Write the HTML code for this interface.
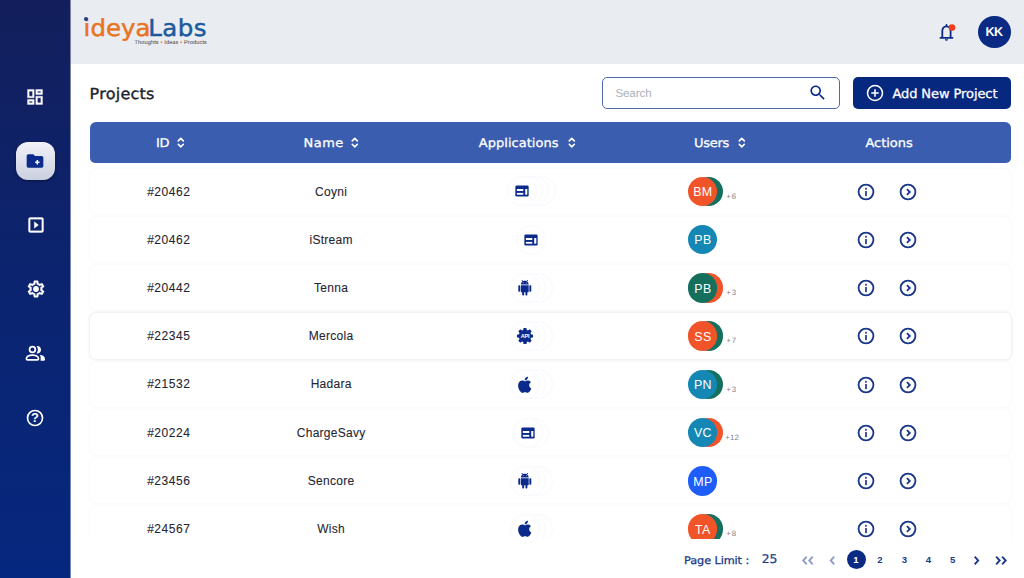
<!DOCTYPE html>
<html lang="en">
<head>
<meta charset="utf-8">
<title>Projects</title>
<style>
*{box-sizing:border-box;margin:0;padding:0}
html,body{width:1024px;height:578px;overflow:hidden;background:#fff;font-family:"Liberation Sans",sans-serif;color:#1b2330}
svg{display:block;position:absolute;overflow:visible}
i{font-style:normal}
#side{position:absolute;left:0;top:0;width:71px;height:578px;background:linear-gradient(180deg,#131f5c 0%,#0b2470 50%,#06277f 100%)}
#side:after{content:'';position:absolute;left:70px;top:0;width:1px;height:578px;background:rgba(255,255,255,.45)}
#top{position:absolute;left:71px;top:0;width:953px;height:64px;background:#e9ecf1}
#active{position:absolute;left:16px;top:142px;width:39px;height:38px;border-radius:12px;background:linear-gradient(180deg,#f2f3f8 0%,#cacfdf 100%);box-shadow:0 1px 3px rgba(0,0,10,.45)}
#kk{position:absolute;left:978.2px;top:15.7px;width:32.7px;height:32.7px;border-radius:50%;background:#0a2a83}
#search{position:absolute;left:602px;top:77px;width:238px;height:32px;border:1px solid #4f68ad;border-radius:5px;background:#fff}
#addbtn{position:absolute;left:853px;top:77px;width:158px;height:32px;border-radius:5px;background:#07287f}
#thead{position:absolute;left:90px;top:122px;width:921px;height:40.5px;border-radius:6px 6px 5px 5px;background:#3b5daf}
.row{position:absolute;left:90px;width:921px;height:45.2px;border-radius:6px;background:#fff;box-shadow:0 0 3px rgba(30,40,70,.055)}
.t{position:absolute;white-space:nowrap;text-rendering:geometricPrecision}
.c{position:absolute;width:200px;text-align:center;white-space:nowrap;color:#1f2733}
.ring{position:absolute;width:30px;height:30px;border-radius:50%;border:1px solid #f8f9fd;background:#fff}
.av{position:absolute;width:29.6px;height:29.6px;border-radius:50%}
.plus{font-size:7.8px;color:#7b7f86;line-height:10px;letter-spacing:.9px}
.tag i{color:#e8731d}
#foot{position:absolute;left:71px;top:538.8px;width:953px;height:39.2px;background:#fff}
</style>
</head>
<body>
<aside>
<div id="side"></div>
<svg style="left:25.2px;top:86.7px" width="20" height="20" viewBox="0 0 24 24" ><path fill="#fff" stroke="#fff" stroke-width=".4" d="M19 5v2h-4V5h4M9 5v6H5V5h4m10 8v6h-4v-6h4M9 17v2H5v-2h4M21 3h-8v6h8V3zM11 3H3v10h8V3zm10 8h-8v10h8V11zm-10 4H3v6h8v-6z"/></svg>
<div id="active"></div>
<svg style="left:25.4px;top:150.6px" width="20" height="20" viewBox="0 0 24 24" ><path fill="#0b2a8c" d="M20 6h-8l-2-2H4c-1.110 0-1.990.89-1.990 2L2 18c0 1.110.89 2 2 2h16c1.110 0 2-.89 2-2V8c0-1.110-.89-2-2-2z"/><path fill="none" stroke="#fff" stroke-width="1.900" d="M14.800 10.900v5.200M12.200 13.500h5.200"/></svg>
<svg style="left:25.5px;top:215.2px" width="20" height="20" viewBox="0 0 24 24" ><path fill="#fff" stroke="#fff" stroke-width=".4" stroke-linejoin="round" d="M10 8v8l5-4-5-4zm9-5H5c-1.1 0-2 .9-2 2v14c0 1.1.9 2 2 2h14c1.1 0 2-.9 2-2V5c0-1.1-.9-2-2-2zm0 16H5V5h14v14z"/></svg>
<svg style="left:25.5px;top:279.1px" width="20" height="20" viewBox="0 0 24 24" ><path fill="#fff" stroke="#fff" stroke-width=".5" d="M19.43 12.98c.04-.32.07-.64.07-.98 0-.34-.03-.66-.07-.98l2.11-1.65c.19-.15.24-.42.12-.64l-2-3.46c-.09-.16-.26-.25-.44-.25-.06 0-.12.01-.17.03l-2.49 1c-.52-.4-1.08-.73-1.69-.98l-.38-2.65C14.460 2.18 14.250 2 14 2h-4c-.25 0-.46.18-.49.42l-.38 2.65c-.61.25-1.17.59-1.69.98l-2.49-1c-.06-.02-.12-.03-.18-.03-.17 0-.34.09-.43.25l-2 3.46c-.13.22-.07.49.12.64l2.11 1.65c-.04.32-.07.65-.07.98 0 .33.03.66.07.98l-2.11 1.650c-.19.15-.24.42-.12.64l2 3.46c.09.16.26.25.44.25.06 0 .12-.01.17-.03l2.49-1c.52.4 1.08.73 1.69.98l.38 2.65c.03.24.24.42.49.42h4c.25 0 .46-.18.49-.42l.38-2.65c.61-.25 1.17-.59 1.69-.98l2.49 1c.06.02.12.03.18.03.17 0 .34-.09.43-.25l2-3.46c.12-.22.07-.49-.12-.64l-2.11-1.65zm-1.980-1.710c.04.31.05.52.05.73 0 .21-.02.43-.05.73l-.14 1.130.89.7 1.080.84-.7 1.210-1.270-.51-1.040-.42-.9.68c-.43.32-.84.56-1.250.73l-1.060.43-.16 1.130-.2 1.350h-1.400l-.19-1.350-.16-1.130-1.060-.43c-.43-.18-.83-.41-1.230-.71l-.91-.7-1.060.43-1.270.51-.7-1.210 1.080-.84.89-.7-.14-1.130c-.03-.31-.05-.54-.05-.74s.02-.43.05-.73l.14-1.130-.89-.7-1.080-.84.7-1.210 1.270.51 1.040.42.9-.68c.43-.32.84-.56 1.250-.73l1.060-.43.16-1.130.2-1.350h1.390l.19 1.350.16 1.130 1.060.43c.43.18.83.41 1.230.71l.91.7 1.060-.43 1.270-.51.7 1.210-1.070.85-.89.7.14 1.130z"/><circle cx="12" cy="12" r="3.5" fill="#fff"/></svg>
<svg style="left:25.1px;top:343.3px" width="20.8" height="20.8" viewBox="0 0 24 24" ><circle cx="8.6" cy="7.6" r="3.3" fill="none" stroke="#fff" stroke-width="2"/><path fill="none" stroke="#fff" stroke-width="2" d="M1.6 18.2c0-2.6 3.4-4.2 7-4.200s7 1.600 7 4.200c0 .9-.6 1.400-1.400 1.400H3c-.8 0-1.400-.5-1.400-1.400z"/><path fill="#fff" d="M14.200 3.400c2.400 0 4.300 1.900 4.300 4.300s-1.900 4.300-4.300 4.300c-.4 0-.7 0-1-.1 1-1.100 1.600-2.600 1.600-4.200s-.6-3.100-1.600-4.200c.3-.1.600-.1 1-.1z"/><path fill="#fff" d="M17.300 13.600c3.100.5 5.700 2 5.700 4.500v1c0 .9-.6 1.500-1.500 1.500h-3.700c.2-.5.300-1 .3-1.500v-1c0-1.800-.3-3.300-.8-4.500z"/></svg>
<svg style="left:25.2px;top:408.3px" width="20" height="20" viewBox="0 0 24 24" ><circle cx="12" cy="12" r="9" fill="none" stroke="#fff" stroke-width="2"/><text x="12" y="17.300" text-anchor="middle" font-family="Liberation Sans, sans-serif" font-weight="700" font-size="15.500" fill="#fff">?</text></svg>
</aside>
<header>
<div id="top"></div>
<span class="t" style="left:83.60px;top:11.12px;font:400 24.5px/34px 'DejaVu Sans','Liberation Sans',sans-serif;letter-spacing:0.00px;color:#e8731d;-webkit-text-stroke:0.5px #e8731d;transform:scaleY(0.95);transform-origin:0 25.48px;">ideya<b style="font-weight:400;margin-left:-2.340px;letter-spacing:.45px;color:#1c5a9d;-webkit-text-stroke-color:#1c5a9d">Labs</b></span>
<i style="position:absolute;left:84.2px;top:17.400px;width:4px;height:4px;border-radius:50%;background:#1d3f86"></i>
<span class="t tag" style="left:134.50px;top:38.86px;font:400 5.6px/8px 'Liberation Sans',sans-serif;letter-spacing:0.12px;color:#3c3c3c;">Thoughts <i>&#8226;</i> Ideas <i>&#8226;</i> Products</span>
<svg style="left:936px;top:20px" width="24" height="24" viewBox="0 0 24 24"><path fill="none" stroke="#0a2a83" stroke-width="1.800" stroke-linejoin="round" d="M6.300 17.700V11c0-2.700 1.700-4.700 4.150-4.700s4.150 2 4.150 4.700v6.700"/><path fill="none" stroke="#0a2a83" stroke-width="1.800" stroke-linecap="round" d="M4.400 17.800H16.500M10.450 6.200V4.900"/><path fill="#0a2a83" d="M8.900 19.300h3.100c0 .9-.7 1.500-1.550 1.500s-1.550-.6-1.550-1.500z"/><circle cx="16" cy="7.600" r="3.300" fill="#ee3d17"/></svg>
<div id="kk"></div>
<span class="t" style="left:985.50px;top:22.93px;font:700 12.6px/18px 'Liberation Sans',sans-serif;letter-spacing:-0.59px;color:#fff;">KK</span>
</header>
<main>
<span class="t" style="left:89.60px;top:83.16px;font:400 16px/22px 'DejaVu Sans','Liberation Sans',sans-serif;letter-spacing:0.24px;color:#1b2330;-webkit-text-stroke:0.4px #1b2330;transform:scaleY(0.95);transform-origin:0 16.54px;">Projects</span>
<div id="search"></div>
<span class="t" style="left:615.40px;top:86.42px;font:400 11.5px/16px 'Liberation Sans',sans-serif;letter-spacing:-0.05px;color:#adb0b5;">Search</span>
<svg style="left:807.7px;top:83.4px" width="19.5" height="19.5" viewBox="0 0 24 24" ><path fill="#0a2a83" d="M15.500 14h-.79l-.28-.27C15.410 12.590 16 11.110 16 9.500 16 5.910 13.090 3 9.500 3S3 5.910 3 9.500 5.910 16 9.500 16c1.610 0 3.090-.59 4.230-1.570l.27.28v.79l5 4.990L20.490 19l-4.990-5zm-6 0C7.010 14 5 11.990 5 9.500S7.010 5 9.500 5 14 7.010 14 9.500 11.990 14 9.500 14z"/></svg>
<div id="addbtn"></div>
<svg style="left:865.3px;top:83px" width="20" height="20" viewBox="0 0 24 24" ><circle cx="12" cy="12" r="9" fill="none" stroke="#fff" stroke-width="1.900"/><path stroke="#fff" stroke-width="1.900" d="M12 7.500v9M7.500 12h9"/></svg>
<span class="t" style="left:892.40px;top:85.90px;font:400 13px/18px 'DejaVu Sans','Liberation Sans',sans-serif;letter-spacing:-0.08px;color:#fff;-webkit-text-stroke:0.3px #fff;transform:scaleY(0.98);transform-origin:0 13.50px;">Add New Project</span>
<section class="table">
<div class="tr">
<div id="thead"></div>
<span class="t" style="left:156.00px;top:134.60px;font:400 13px/18px 'DejaVu Sans','Liberation Sans',sans-serif;letter-spacing:-0.33px;color:#fff;-webkit-text-stroke:0.3px #fff;transform:scaleY(0.93);transform-origin:0 13.50px;">ID</span>
<svg style="left:177.4px;top:137px" width="7.600" height="11.200" viewBox="0 0 9 13"><path fill="none" stroke="#fff" stroke-width="1.950" stroke-linecap="round" stroke-linejoin="round" d="M1.500 4.500L4.500 1.500L7.500 4.500M1.500 8.500L4.500 11.500L7.500 8.500"/></svg>
<span class="t" style="left:303.60px;top:134.60px;font:400 13px/18px 'DejaVu Sans','Liberation Sans',sans-serif;letter-spacing:0.45px;color:#fff;-webkit-text-stroke:0.3px #fff;transform:scaleY(0.93);transform-origin:0 13.50px;">Name</span>
<svg style="left:351.3px;top:137px" width="7.600" height="11.200" viewBox="0 0 9 13"><path fill="none" stroke="#fff" stroke-width="1.950" stroke-linecap="round" stroke-linejoin="round" d="M1.500 4.500L4.500 1.500L7.500 4.500M1.500 8.500L4.500 11.500L7.500 8.500"/></svg>
<span class="t" style="left:478.75px;top:134.60px;font:400 13px/18px 'DejaVu Sans','Liberation Sans',sans-serif;letter-spacing:0.03px;color:#fff;-webkit-text-stroke:0.3px #fff;transform:scaleY(0.93);transform-origin:0 13.50px;">Applications</span>
<svg style="left:567.6px;top:137px" width="7.600" height="11.200" viewBox="0 0 9 13"><path fill="none" stroke="#fff" stroke-width="1.950" stroke-linecap="round" stroke-linejoin="round" d="M1.500 4.500L4.500 1.500L7.500 4.500M1.500 8.500L4.500 11.500L7.500 8.500"/></svg>
<span class="t" style="left:694.00px;top:134.60px;font:400 13px/18px 'DejaVu Sans','Liberation Sans',sans-serif;letter-spacing:-0.28px;color:#fff;-webkit-text-stroke:0.3px #fff;transform:scaleY(0.93);transform-origin:0 13.50px;">Users</span>
<svg style="left:738.2px;top:137px" width="7.600" height="11.200" viewBox="0 0 9 13"><path fill="none" stroke="#fff" stroke-width="1.950" stroke-linecap="round" stroke-linejoin="round" d="M1.500 4.500L4.500 1.500L7.500 4.500M1.500 8.500L4.500 11.500L7.500 8.500"/></svg>
<span class="t" style="left:865.50px;top:134.60px;font:400 13px/18px 'DejaVu Sans','Liberation Sans',sans-serif;letter-spacing:-0.04px;color:#fff;-webkit-text-stroke:0.3px #fff;transform:scaleY(0.93);transform-origin:0 13.50px;">Actions</span>
</div>
<div class="tr">
<div class="row" style="top:168.70px"></div>
<span class="c" style="left:68.76px;top:184px;font:12px/17px 'Liberation Sans',sans-serif;letter-spacing:.52px;-webkit-text-stroke:.1px #1f2733">#20462</span>
<span class="c" style="left:231.13px;top:184px;font:12px/17px 'Liberation Sans',sans-serif;letter-spacing:.27px;-webkit-text-stroke:.1px #1f2733">Coyni</span>
<i class="ring" style="left:525.8px;top:176.4px"></i>
<i class="ring" style="left:519.4px;top:176.4px"></i>
<i class="ring" style="left:513.0px;top:176.4px"></i>
<i class="ring" style="left:506.6px;top:176.4px"></i>
<svg style="left:513.6px;top:183.4px" width="16" height="16" viewBox="0 0 24 24" ><g transform="scale(1.5)"><rect x="1.350" y="2.400" width="13.300" height="11.200" rx="1.400" fill="#0b2a8c"/><rect x="2.900" y="6" width="6.400" height="2" fill="#fff"/><rect x="2.900" y="9.900" width="6.400" height="1.800" fill="#fff"/><rect x="11.200" y="6" width="2.100" height="5.700" fill="#fff"/></g></svg>
<i class="av" style="left:693.8px;top:176.6px;background:#146f5d"></i>
<i class="av" style="left:687.8px;top:176.6px;background:#f2542a"></i>
<span class="c" style="left:602.9px;top:184px;font:12.4px/17px 'Liberation Sans',sans-serif;letter-spacing:.4px;color:#fff">BM</span>
<span class="t plus" style="left:726.2px;top:191.7px">+6</span>
<svg style="left:855.8px;top:181.6px" width="20" height="20" viewBox="0 0 24 24" ><circle cx="12" cy="12" r="8.900" fill="none" stroke="#1b3789" stroke-width="2.200"/><rect x="11" y="10.800" width="2" height="6.200" fill="#1b3789"/><rect x="11" y="7" width="2" height="2.200" fill="#1b3789"/></svg>
<svg style="left:897.7px;top:181.6px" width="20" height="20" viewBox="0 0 24 24" ><circle cx="12" cy="12" r="8.900" fill="none" stroke="#1b3789" stroke-width="2.200"/><path fill="none" stroke="#1b3789" stroke-width="2.200" d="M10.700 8.500L14.200 12L10.700 15.500"/></svg>
</div>
<div class="tr">
<div class="row" style="top:216.95px"></div>
<span class="c" style="left:68.76px;top:232px;font:12px/17px 'Liberation Sans',sans-serif;letter-spacing:.52px;-webkit-text-stroke:.1px #1f2733">#20462</span>
<span class="c" style="left:231.13px;top:232px;font:12px/17px 'Liberation Sans',sans-serif;letter-spacing:.27px;-webkit-text-stroke:.1px #1f2733">iStream</span>
<i class="ring" style="left:516.2px;top:224.7px"></i>
<svg style="left:523.2px;top:231.65px" width="16" height="16" viewBox="0 0 24 24" ><g transform="scale(1.5)"><rect x="1.350" y="2.400" width="13.300" height="11.200" rx="1.400" fill="#0b2a8c"/><rect x="2.900" y="6" width="6.400" height="2" fill="#fff"/><rect x="2.900" y="9.900" width="6.400" height="1.800" fill="#fff"/><rect x="11.200" y="6" width="2.100" height="5.700" fill="#fff"/></g></svg>
<i class="av" style="left:687.8px;top:224.8px;background:#1487b5"></i>
<span class="c" style="left:602.9px;top:232px;font:12.4px/17px 'Liberation Sans',sans-serif;letter-spacing:.4px;color:#fff">PB</span>
<svg style="left:855.8px;top:229.8px" width="20" height="20" viewBox="0 0 24 24" ><circle cx="12" cy="12" r="8.900" fill="none" stroke="#1b3789" stroke-width="2.200"/><rect x="11" y="10.800" width="2" height="6.200" fill="#1b3789"/><rect x="11" y="7" width="2" height="2.200" fill="#1b3789"/></svg>
<svg style="left:897.7px;top:229.8px" width="20" height="20" viewBox="0 0 24 24" ><circle cx="12" cy="12" r="8.900" fill="none" stroke="#1b3789" stroke-width="2.200"/><path fill="none" stroke="#1b3789" stroke-width="2.200" d="M10.700 8.500L14.200 12L10.700 15.500"/></svg>
</div>
<div class="tr">
<div class="row" style="top:265.20px"></div>
<span class="c" style="left:68.76px;top:280px;font:12px/17px 'Liberation Sans',sans-serif;letter-spacing:.52px;-webkit-text-stroke:.1px #1f2733">#20442</span>
<span class="c" style="left:231.13px;top:280px;font:12px/17px 'Liberation Sans',sans-serif;letter-spacing:.27px;-webkit-text-stroke:.1px #1f2733">Tenna</span>
<i class="ring" style="left:522.6px;top:272.9px"></i>
<i class="ring" style="left:516.2px;top:272.9px"></i>
<i class="ring" style="left:509.8px;top:272.9px"></i>
<svg style="left:517.0px;top:280.1px" width="15.6" height="15.6" viewBox="0 0 24 24" ><path fill="#0b2a8c" d="M6 18c0 .55.45 1 1 1h1v3.500c0 .83.67 1.500 1.500 1.500s1.500-.67 1.500-1.500V19h2v3.500c0 .83.67 1.500 1.500 1.500s1.500-.67 1.500-1.500V19h1c.55 0 1-.45 1-1V8H6v10zM3.500 8C2.670 8 2 8.670 2 9.500v7c0 .83.67 1.500 1.500 1.500S5 17.330 5 16.500v-7C5 8.670 4.330 8 3.500 8zm17 0c-.83 0-1.500.67-1.500 1.500v7c0 .83.67 1.500 1.500 1.500s1.500-.67 1.500-1.500v-7c0-.83-.67-1.500-1.500-1.500zm-4.970-5.840l1.300-1.300c.2-.2.2-.51 0-.71-.2-.2-.51-.2-.71 0l-1.480 1.480C13.850 1.230 12.950 1 12 1c-.96 0-1.860.23-2.660.63L7.850.15c-.2-.2-.51-.2-.71 0-.2.2-.2.51 0 .71l1.310 1.310C6.970 3.260 6 5.010 6 7h12c0-1.990-.97-3.750-2.470-4.840zM10 5H9V4h1v1zm5 0h-1V4h1v1z"/></svg>
<i class="av" style="left:693.8px;top:273.1px;background:#f2542a"></i>
<i class="av" style="left:687.8px;top:273.1px;background:#146f5d"></i>
<span class="c" style="left:602.9px;top:281px;font:12.4px/17px 'Liberation Sans',sans-serif;letter-spacing:.4px;color:#fff">PB</span>
<span class="t plus" style="left:726.2px;top:288.2px">+3</span>
<svg style="left:855.8px;top:278.1px" width="20" height="20" viewBox="0 0 24 24" ><circle cx="12" cy="12" r="8.900" fill="none" stroke="#1b3789" stroke-width="2.200"/><rect x="11" y="10.800" width="2" height="6.200" fill="#1b3789"/><rect x="11" y="7" width="2" height="2.200" fill="#1b3789"/></svg>
<svg style="left:897.7px;top:278.1px" width="20" height="20" viewBox="0 0 24 24" ><circle cx="12" cy="12" r="8.900" fill="none" stroke="#1b3789" stroke-width="2.200"/><path fill="none" stroke="#1b3789" stroke-width="2.200" d="M10.700 8.500L14.200 12L10.700 15.500"/></svg>
</div>
<div class="tr">
<div class="row" style="top:313.45px;box-shadow:0 0 3.5px rgba(20,25,40,.15)"></div>
<span class="c" style="left:68.76px;top:328px;font:12px/17px 'Liberation Sans',sans-serif;letter-spacing:.52px;-webkit-text-stroke:.1px #1f2733">#22345</span>
<span class="c" style="left:231.13px;top:328px;font:12px/17px 'Liberation Sans',sans-serif;letter-spacing:.27px;-webkit-text-stroke:.1px #1f2733">Mercola</span>
<i class="ring" style="left:522.6px;top:321.1px"></i>
<i class="ring" style="left:516.2px;top:321.1px"></i>
<i class="ring" style="left:509.8px;top:321.1px"></i>
<svg style="left:515.8px;top:327.15px" width="18" height="18" viewBox="0 0 24 24" ><path fill="#0b2a8c" stroke="#0b2a8c" stroke-width="1.600" stroke-linejoin="round" d="M19.43 10.40 L21.91 10.67 L21.91 13.33 L19.43 13.60 L18.38 16.12 L19.95 18.07 L18.07 19.95 L16.12 18.38 L13.60 19.43 L13.33 21.91 L10.67 21.91 L10.40 19.43 L7.88 18.38 L5.93 19.95 L4.05 18.07 L5.62 16.12 L4.57 13.60 L2.09 13.33 L2.09 10.67 L4.57 10.40 L5.62 7.88 L4.05 5.93 L5.93 4.05 L7.88 5.62 L10.40 4.57 L10.67 2.09 L13.33 2.09 L13.60 4.57 L16.12 5.62 L18.07 4.05 L19.95 5.93 L18.38 7.88Z"/><text x="12" y="14.700" text-anchor="middle" font-family="Liberation Sans, sans-serif" font-weight="700" font-size="7.500" fill="#fff" letter-spacing="-.3">API</text></svg>
<i class="av" style="left:693.8px;top:321.3px;background:#146f5d"></i>
<i class="av" style="left:687.8px;top:321.3px;background:#f2542a"></i>
<span class="c" style="left:602.9px;top:329px;font:12.4px/17px 'Liberation Sans',sans-serif;letter-spacing:.4px;color:#fff">SS</span>
<span class="t plus" style="left:726.2px;top:336.4px">+7</span>
<svg style="left:855.8px;top:326.3px" width="20" height="20" viewBox="0 0 24 24" ><circle cx="12" cy="12" r="8.900" fill="none" stroke="#1b3789" stroke-width="2.200"/><rect x="11" y="10.800" width="2" height="6.200" fill="#1b3789"/><rect x="11" y="7" width="2" height="2.200" fill="#1b3789"/></svg>
<svg style="left:897.7px;top:326.3px" width="20" height="20" viewBox="0 0 24 24" ><circle cx="12" cy="12" r="8.900" fill="none" stroke="#1b3789" stroke-width="2.200"/><path fill="none" stroke="#1b3789" stroke-width="2.200" d="M10.700 8.500L14.200 12L10.700 15.500"/></svg>
</div>
<div class="tr">
<div class="row" style="top:361.70px"></div>
<span class="c" style="left:68.76px;top:376px;font:12px/17px 'Liberation Sans',sans-serif;letter-spacing:.52px;-webkit-text-stroke:.1px #1f2733">#21532</span>
<span class="c" style="left:231.13px;top:376px;font:12px/17px 'Liberation Sans',sans-serif;letter-spacing:.27px;-webkit-text-stroke:.1px #1f2733">Hadara</span>
<i class="ring" style="left:522.6px;top:369.4px"></i>
<i class="ring" style="left:516.2px;top:369.4px"></i>
<i class="ring" style="left:509.8px;top:369.4px"></i>
<svg style="left:515.05px;top:374.65px" width="19.5" height="19.5" viewBox="0 0 24 24" ><path fill="#0b2a8c" d="M18.710 19.500c-.83 1.240-1.710 2.450-3.050 2.470-1.340.03-1.770-.79-3.290-.79-1.530 0-2 .77-3.270.82-1.310.05-2.300-1.320-3.140-2.530C4.250 17 2.940 12.450 4.700 9.390c.87-1.520 2.430-2.480 4.120-2.510 1.280-.02 2.500.87 3.290.87.780 0 2.260-1.070 3.810-.91.650.03 2.470.26 3.640 1.980-.09.06-2.170 1.280-2.150 3.810.03 3.020 2.650 4.030 2.680 4.040-.03.07-.42 1.440-1.380 2.830M13 3.500c.73-.83 1.940-1.460 2.940-1.500.13 1.170-.34 2.350-1.040 3.190-.69.850-1.830 1.510-2.950 1.420-.15-1.150.41-2.350 1.050-3.110z"/></svg>
<i class="av" style="left:693.8px;top:369.6px;background:#146f5d"></i>
<i class="av" style="left:687.8px;top:369.6px;background:#1487b5"></i>
<span class="c" style="left:602.9px;top:377px;font:12.4px/17px 'Liberation Sans',sans-serif;letter-spacing:.4px;color:#fff">PN</span>
<span class="t plus" style="left:726.2px;top:384.7px">+3</span>
<svg style="left:855.8px;top:374.6px" width="20" height="20" viewBox="0 0 24 24" ><circle cx="12" cy="12" r="8.900" fill="none" stroke="#1b3789" stroke-width="2.200"/><rect x="11" y="10.800" width="2" height="6.200" fill="#1b3789"/><rect x="11" y="7" width="2" height="2.200" fill="#1b3789"/></svg>
<svg style="left:897.7px;top:374.6px" width="20" height="20" viewBox="0 0 24 24" ><circle cx="12" cy="12" r="8.900" fill="none" stroke="#1b3789" stroke-width="2.200"/><path fill="none" stroke="#1b3789" stroke-width="2.200" d="M10.700 8.500L14.200 12L10.700 15.500"/></svg>
</div>
<div class="tr">
<div class="row" style="top:409.95px"></div>
<span class="c" style="left:68.76px;top:425px;font:12px/17px 'Liberation Sans',sans-serif;letter-spacing:.52px;-webkit-text-stroke:.1px #1f2733">#20224</span>
<span class="c" style="left:231.13px;top:425px;font:12px/17px 'Liberation Sans',sans-serif;letter-spacing:.27px;-webkit-text-stroke:.1px #1f2733">ChargeSavy</span>
<i class="ring" style="left:519.4px;top:417.6px"></i>
<i class="ring" style="left:513.0px;top:417.6px"></i>
<svg style="left:520.0px;top:424.65px" width="16" height="16" viewBox="0 0 24 24" ><g transform="scale(1.5)"><rect x="1.350" y="2.400" width="13.300" height="11.200" rx="1.400" fill="#0b2a8c"/><rect x="2.900" y="6" width="6.400" height="2" fill="#fff"/><rect x="2.900" y="9.900" width="6.400" height="1.800" fill="#fff"/><rect x="11.200" y="6" width="2.100" height="5.700" fill="#fff"/></g></svg>
<i class="av" style="left:693.8px;top:417.8px;background:#f2542a"></i>
<i class="av" style="left:687.8px;top:417.8px;background:#1487b5"></i>
<span class="c" style="left:602.9px;top:425px;font:12.4px/17px 'Liberation Sans',sans-serif;letter-spacing:.4px;color:#fff">VC</span>
<span class="t plus" style="left:725.3px;letter-spacing:.1px;top:432.9px">+12</span>
<svg style="left:855.8px;top:422.8px" width="20" height="20" viewBox="0 0 24 24" ><circle cx="12" cy="12" r="8.900" fill="none" stroke="#1b3789" stroke-width="2.200"/><rect x="11" y="10.800" width="2" height="6.200" fill="#1b3789"/><rect x="11" y="7" width="2" height="2.200" fill="#1b3789"/></svg>
<svg style="left:897.7px;top:422.8px" width="20" height="20" viewBox="0 0 24 24" ><circle cx="12" cy="12" r="8.900" fill="none" stroke="#1b3789" stroke-width="2.200"/><path fill="none" stroke="#1b3789" stroke-width="2.200" d="M10.700 8.500L14.200 12L10.700 15.500"/></svg>
</div>
<div class="tr">
<div class="row" style="top:458.20px"></div>
<span class="c" style="left:68.76px;top:473px;font:12px/17px 'Liberation Sans',sans-serif;letter-spacing:.52px;-webkit-text-stroke:.1px #1f2733">#23456</span>
<span class="c" style="left:231.13px;top:473px;font:12px/17px 'Liberation Sans',sans-serif;letter-spacing:.27px;-webkit-text-stroke:.1px #1f2733">Sencore</span>
<i class="ring" style="left:522.6px;top:465.9px"></i>
<i class="ring" style="left:516.2px;top:465.9px"></i>
<i class="ring" style="left:509.8px;top:465.9px"></i>
<svg style="left:517.0px;top:473.1px" width="15.6" height="15.6" viewBox="0 0 24 24" ><path fill="#0b2a8c" d="M6 18c0 .55.45 1 1 1h1v3.500c0 .83.67 1.500 1.500 1.500s1.500-.67 1.500-1.500V19h2v3.500c0 .83.67 1.500 1.500 1.500s1.500-.67 1.500-1.500V19h1c.55 0 1-.45 1-1V8H6v10zM3.500 8C2.670 8 2 8.670 2 9.500v7c0 .83.67 1.500 1.500 1.500S5 17.330 5 16.500v-7C5 8.670 4.330 8 3.500 8zm17 0c-.83 0-1.500.67-1.500 1.500v7c0 .83.67 1.500 1.500 1.500s1.500-.67 1.500-1.500v-7c0-.83-.67-1.500-1.500-1.500zm-4.970-5.840l1.300-1.300c.2-.2.2-.51 0-.71-.2-.2-.51-.2-.71 0l-1.480 1.480C13.850 1.230 12.950 1 12 1c-.96 0-1.860.23-2.660.63L7.850.15c-.2-.2-.51-.2-.71 0-.2.2-.2.51 0 .71l1.310 1.310C6.970 3.260 6 5.010 6 7h12c0-1.990-.97-3.750-2.470-4.840zM10 5H9V4h1v1zm5 0h-1V4h1v1z"/></svg>
<i class="av" style="left:687.8px;top:466.1px;background:#1f5dfa"></i>
<span class="c" style="left:602.9px;top:474px;font:12.4px/17px 'Liberation Sans',sans-serif;letter-spacing:.4px;color:#fff">MP</span>
<svg style="left:855.8px;top:471.1px" width="20" height="20" viewBox="0 0 24 24" ><circle cx="12" cy="12" r="8.900" fill="none" stroke="#1b3789" stroke-width="2.200"/><rect x="11" y="10.800" width="2" height="6.200" fill="#1b3789"/><rect x="11" y="7" width="2" height="2.200" fill="#1b3789"/></svg>
<svg style="left:897.7px;top:471.1px" width="20" height="20" viewBox="0 0 24 24" ><circle cx="12" cy="12" r="8.900" fill="none" stroke="#1b3789" stroke-width="2.200"/><path fill="none" stroke="#1b3789" stroke-width="2.200" d="M10.700 8.500L14.200 12L10.700 15.500"/></svg>
</div>
<div class="tr">
<div class="row" style="top:506.45px"></div>
<span class="c" style="left:68.76px;top:521px;font:12px/17px 'Liberation Sans',sans-serif;letter-spacing:.52px;-webkit-text-stroke:.1px #1f2733">#24567</span>
<span class="c" style="left:231.13px;top:521px;font:12px/17px 'Liberation Sans',sans-serif;letter-spacing:.27px;-webkit-text-stroke:.1px #1f2733">Wish</span>
<i class="ring" style="left:522.6px;top:514.1px"></i>
<i class="ring" style="left:516.2px;top:514.1px"></i>
<i class="ring" style="left:509.8px;top:514.1px"></i>
<svg style="left:515.05px;top:519.4px" width="19.5" height="19.5" viewBox="0 0 24 24" ><path fill="#0b2a8c" d="M18.710 19.500c-.83 1.240-1.710 2.450-3.050 2.470-1.340.03-1.770-.79-3.290-.79-1.530 0-2 .77-3.270.82-1.310.05-2.300-1.320-3.140-2.530C4.250 17 2.940 12.450 4.700 9.390c.87-1.520 2.430-2.480 4.120-2.510 1.280-.02 2.500.87 3.290.87.780 0 2.260-1.070 3.810-.91.650.03 2.470.26 3.640 1.980-.09.06-2.170 1.280-2.150 3.810.03 3.020 2.650 4.030 2.680 4.040-.03.07-.42 1.440-1.380 2.830M13 3.500c.73-.83 1.940-1.460 2.940-1.500.13 1.170-.34 2.350-1.040 3.190-.69.850-1.830 1.510-2.950 1.420-.15-1.150.41-2.350 1.050-3.110z"/></svg>
<i class="av" style="left:693.8px;top:514.4px;background:#146f5d"></i>
<i class="av" style="left:687.8px;top:514.4px;background:#f2542a"></i>
<span class="c" style="left:602.9px;top:522px;font:12.4px/17px 'Liberation Sans',sans-serif;letter-spacing:.4px;color:#fff">TA</span>
<span class="t plus" style="left:726.2px;top:529.4px">+8</span>
<svg style="left:855.8px;top:519.4px" width="20" height="20" viewBox="0 0 24 24" ><circle cx="12" cy="12" r="8.900" fill="none" stroke="#1b3789" stroke-width="2.200"/><rect x="11" y="10.800" width="2" height="6.200" fill="#1b3789"/><rect x="11" y="7" width="2" height="2.200" fill="#1b3789"/></svg>
<svg style="left:897.7px;top:519.4px" width="20" height="20" viewBox="0 0 24 24" ><circle cx="12" cy="12" r="8.900" fill="none" stroke="#1b3789" stroke-width="2.200"/><path fill="none" stroke="#1b3789" stroke-width="2.200" d="M10.700 8.500L14.200 12L10.700 15.500"/></svg>
</div>
</section>
</main>
<footer>
<div id="foot"></div>
<span class="t" style="left:684.10px;top:553.09px;font:400 11.3px/16px 'DejaVu Sans','Liberation Sans',sans-serif;letter-spacing:-0.11px;color:#1b3a8a;-webkit-text-stroke:0.3px #1b3a8a;transform:scaleY(0.93);transform-origin:0 11.91px;">Page Limit :</span>
<span class="t" style="left:761.80px;top:550.94px;font:400 12.3px/17px 'DejaVu Sans','Liberation Sans',sans-serif;letter-spacing:-0.12px;color:#1b3a8a;-webkit-text-stroke:0.25px #1b3a8a;transform:scaleY(0.97);transform-origin:0 12.76px;">25</span>
<svg style="left:802px;top:555.500px" width="12" height="9" viewBox="0 0 12 9"><path fill="none" stroke="#8f9dcb" stroke-width="1.900" d="M4.700 .6L1.200 4.500L4.700 8.400M10.700 .6L7.200 4.500L10.700 8.400"/></svg>
<svg style="left:828.500px;top:555.500px" width="7" height="9" viewBox="0 0 7 9"><path fill="none" stroke="#8f9dcb" stroke-width="1.900" d="M5.200 .6L1.700 4.500L5.200 8.400"/></svg>
<i style="position:absolute;left:846.500px;top:550.300px;width:19px;height:19px;border-radius:50%;background:#0a2a83"></i>
<span class="c" style="left:756.0px;top:554px;font:700 9.6px/12px 'Liberation Sans',sans-serif;color:#fff">1</span>
<span class="c" style="left:780.0px;top:554px;font:700 9.6px/12px 'Liberation Sans',sans-serif;color:#1b3a8a">2</span>
<span class="c" style="left:804.3px;top:554px;font:700 9.6px/12px 'Liberation Sans',sans-serif;color:#1b3a8a">3</span>
<span class="c" style="left:828.3px;top:554px;font:700 9.6px/12px 'Liberation Sans',sans-serif;color:#1b3a8a">4</span>
<span class="c" style="left:852.7px;top:554px;font:700 9.6px/12px 'Liberation Sans',sans-serif;color:#1b3a8a">5</span>
<svg style="left:973px;top:555.500px" width="7" height="9" viewBox="0 0 7 9"><path fill="none" stroke="#1b3a8a" stroke-width="1.900" d="M1.700 .6L5.200 4.500L1.700 8.400"/></svg>
<svg style="left:995px;top:555.500px" width="12" height="9" viewBox="0 0 12 9"><path fill="none" stroke="#1b3a8a" stroke-width="1.900" d="M1.200 .6L4.700 4.500L1.200 8.400M7.200 .6L10.700 4.500L7.200 8.400"/></svg>
</footer>
</body>
</html>
